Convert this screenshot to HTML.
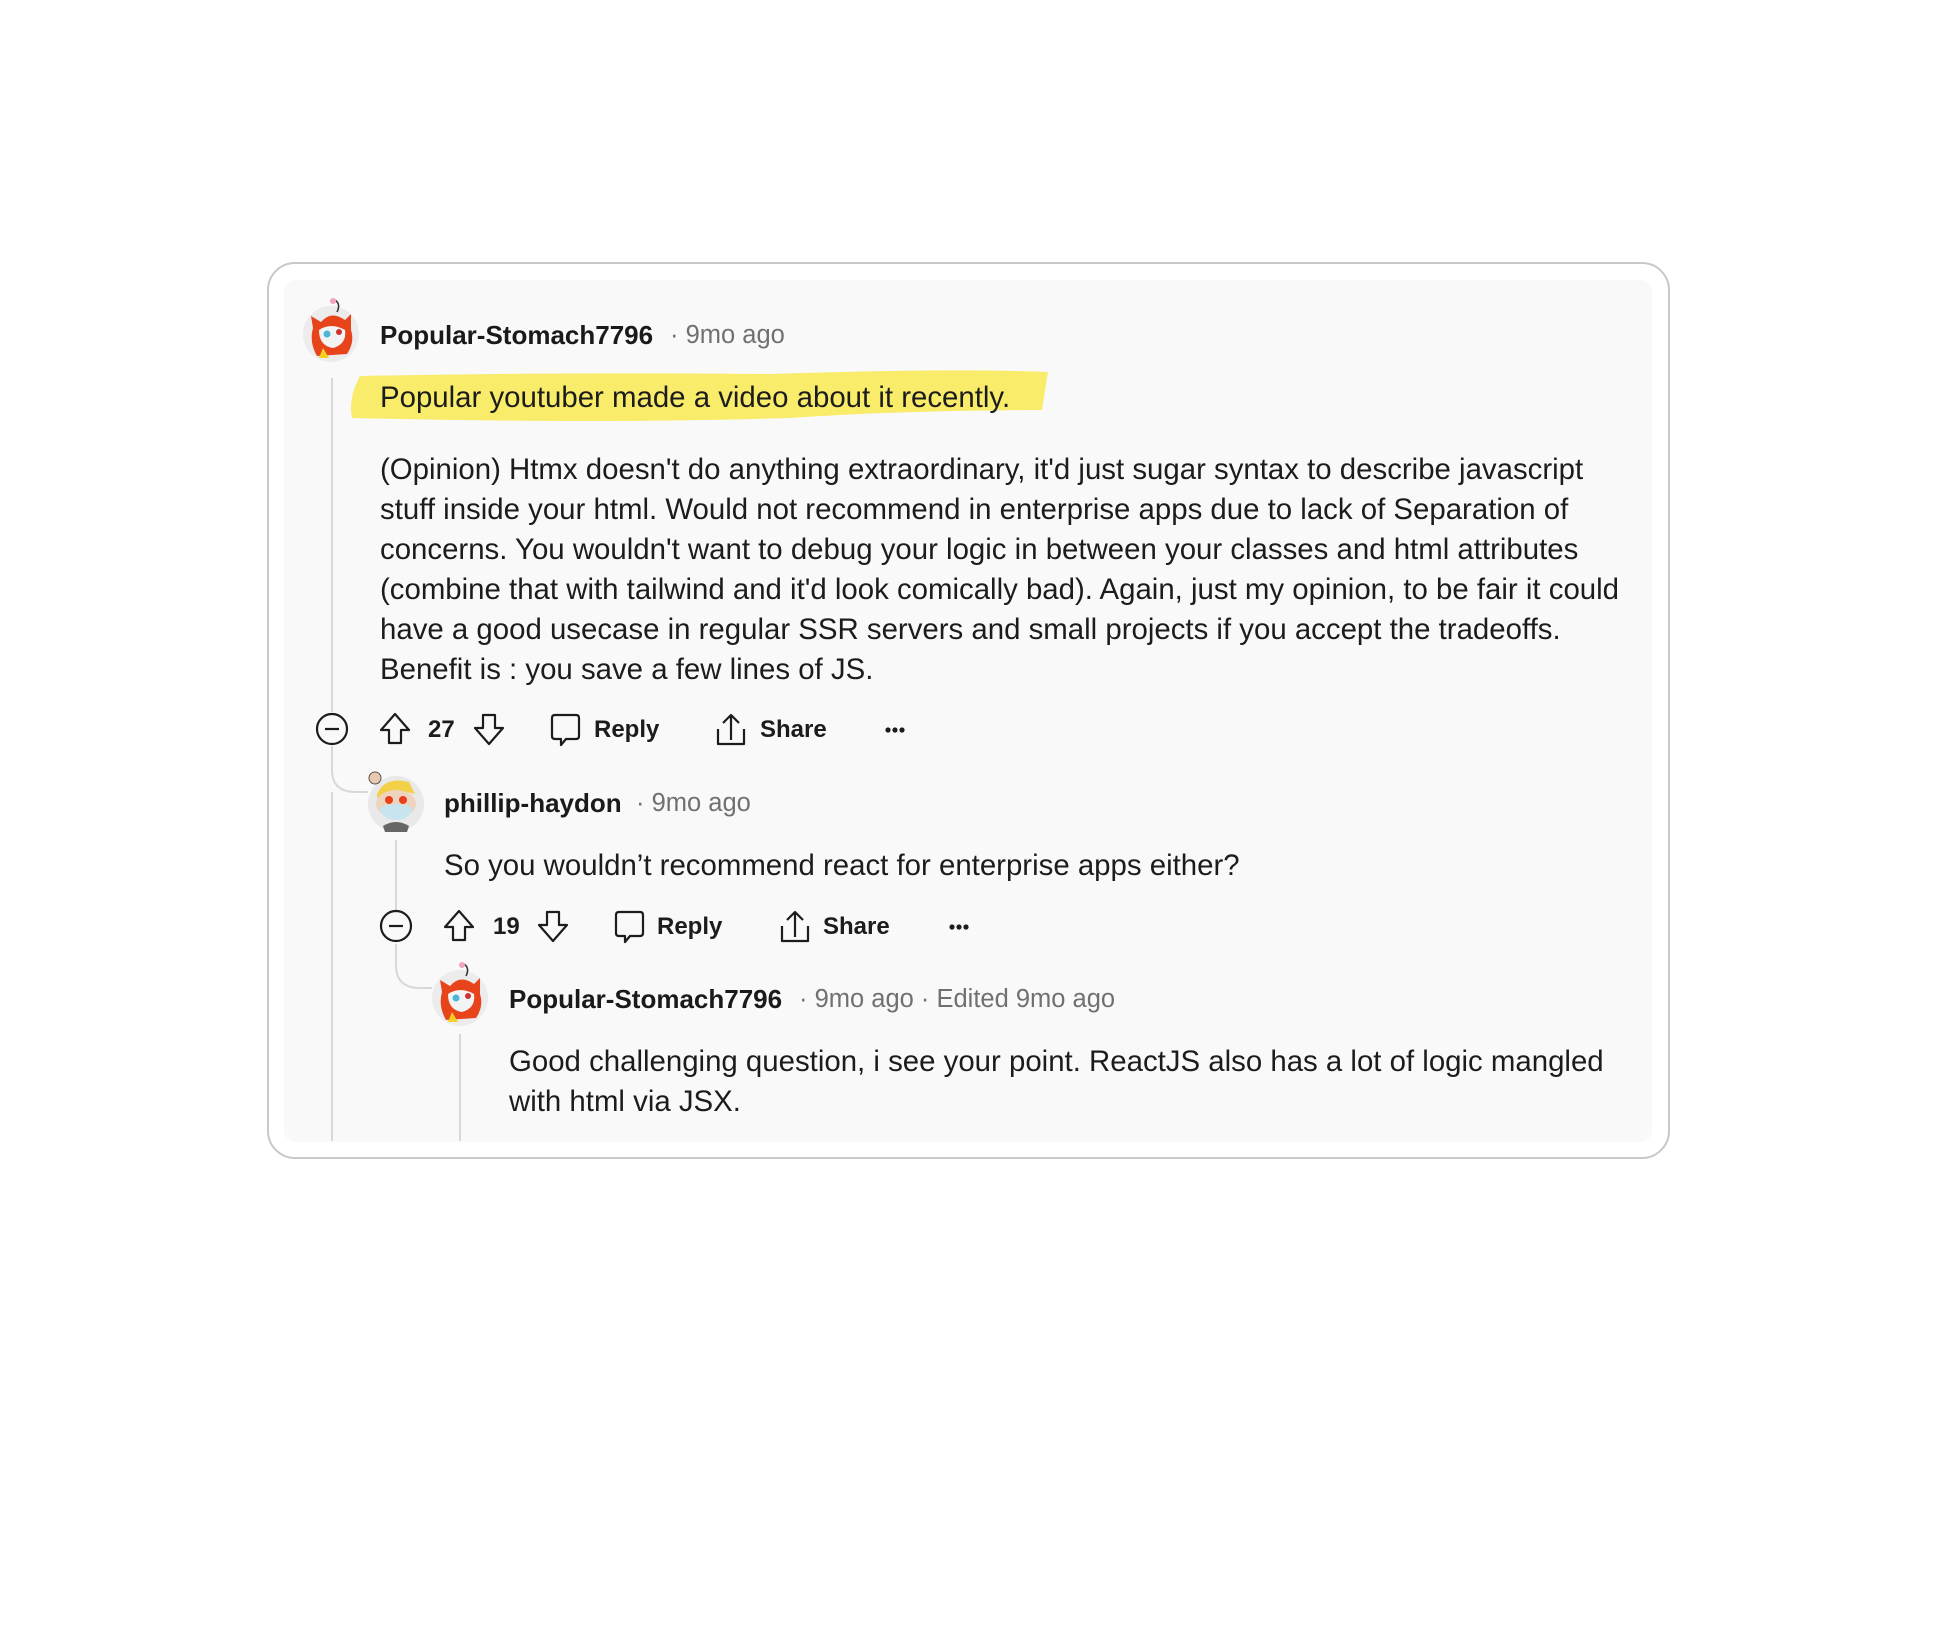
<!DOCTYPE html>
<html><head><meta charset="utf-8">
<style>
*{margin:0;padding:0;box-sizing:border-box}
body{width:1936px;height:1430px;background:#fff;position:relative;overflow:hidden;font-family:"Liberation Sans",Arial,sans-serif;color:#1c1c1c}
.card{position:absolute;left:267px;top:262px;width:1403px;height:897px;border:2px solid #c8c8c8;border-radius:28px;background:#fff}
.inner{position:absolute;left:284px;top:280px;width:1368px;height:862px;background:#f9f9f9;border-radius:12px}
.a{position:absolute;white-space:nowrap}
.name{font-weight:bold;font-size:26px;line-height:30px;color:#1a1a1a}
.meta{font-size:25.5px;line-height:30px;color:#707070}
.body{font-size:29.4px;line-height:40px;color:#1c1c1c}
.act{font-weight:bold;font-size:24px;line-height:30px;color:#1c1c1c}
svg.i{position:absolute;overflow:visible}
</style></head><body>
<div class="card"></div>
<div class="inner"></div>

<svg class="i" style="left:0;top:0" width="1936" height="1430">
 <g fill="none" stroke="#d8d8d8" stroke-width="2">
  <line x1="332" y1="378" x2="332" y2="712"/>
  <path d="M332 746 V770 Q332 792 356 792 H368"/>
  <line x1="332" y1="792" x2="332" y2="1141"/>
  <line x1="396" y1="840" x2="396" y2="910"/>
  <path d="M396 944 V965 Q396 988 420 988 H432"/>
  <line x1="460" y1="1034" x2="460" y2="1141"/>
 </g>
</svg>

<svg class="i" style="left:301px;top:298px" width="60" height="66" viewBox="0 0 60 66">
 <circle cx="30" cy="36" r="28" fill="#ececec"/>
 <path d="M36 14 Q40 6 34 2" stroke="#333" fill="none" stroke-width="1.5"/><circle cx="32" cy="3" r="3" fill="#f4a4b8"/>
 <path d="M12 30 L10 18 L20 24 Q30 12 44 22 L50 16 L50 32 Q54 44 46 56 L16 58 Q8 44 12 30Z" fill="#e8441c"/>
 <path d="M18 32 Q30 24 44 32 Q46 46 32 50 Q18 48 18 32Z" fill="#f3f3f3"/>
 <circle cx="26" cy="36" r="3.5" fill="#4bb7d8"/><circle cx="38" cy="34" r="3" fill="#c33"/>
 <path d="M22 50 L28 60 L18 60Z" fill="#f5d020"/>
</svg>

<div class="a name" style="left:380px;top:320px">Popular-Stomach7796</div>
<div class="a meta" style="left:670px;top:320px">· 9mo ago</div>

<svg class="i" style="left:350px;top:368px" width="700" height="64" viewBox="0 0 700 64">
 <path d="M10 8 Q200 4 420 6 Q600 0 698 4 L692 42 Q560 42 440 50 Q250 56 2 50 Q-2 30 10 8Z" fill="#f8ec6a"/>
</svg>
<div class="a body" style="left:380px;top:378px">Popular youtuber made a video about it recently.</div>

<div class="a body" style="left:380px;top:450px;line-height:40px">(Opinion) Htmx doesn't do anything extraordinary, it'd just sugar syntax to describe javascript<br>stuff inside your html. Would not recommend in enterprise apps due to lack of Separation of<br>concerns. You wouldn't want to debug your logic in between your classes and html attributes<br>(combine that with tailwind and it'd look comically bad). Again, just my opinion, to be fair it could<br>have a good usecase in regular SSR servers and small projects if you accept the tradeoffs.<br>Benefit is : you save a few lines of JS.</div>

<svg class="i" style="left:0;top:0" width="1936" height="1430">
 <g fill="none" stroke="#1c1c1c" stroke-width="2.2" stroke-linejoin="round">
  <circle cx="332" cy="729" r="15"/><line x1="325" y1="729" x2="339" y2="729"/>
  <path d="M395 714 L409 730 H401 V743 H389 V730 H381Z"/>
  <path d="M489 744 L503 728 H495 V715 H483 V728 H475Z"/>
  <path d="M555 715 H576 Q579 715 579 718 V736 Q579 739 576 739 H566 L561 745 V739 H555 Q552 739 552 736 V718 Q552 715 555 715Z"/>
  <path d="M731 740 V716 M723 723 L731 715 L739 723 M718 729 V744 H744 V729"/>
 </g>
 <g fill="#1c1c1c"><circle cx="888" cy="730" r="2.6"/><circle cx="895" cy="730" r="2.6"/><circle cx="902" cy="730" r="2.6"/></g>
</svg>
<div class="a act" style="left:428px;top:715px">27</div>
<div class="a act" style="left:594px;top:715px">Reply</div>
<div class="a act" style="left:760px;top:715px">Share</div>

<svg class="i" style="left:365px;top:768px" width="62" height="66" viewBox="0 0 62 66">
 <circle cx="31" cy="36" r="28" fill="#e9e9e9"/>
 <circle cx="10" cy="10" r="6" fill="#e8c9b0" stroke="#555" stroke-width="1"/>
 <path d="M12 26 Q20 8 44 14 L50 26 Q30 20 12 30Z" fill="#f3d048"/>
 <ellipse cx="31" cy="36" rx="20" ry="14" fill="#eed3bf"/>
 <circle cx="24" cy="32" r="4" fill="#e8401c"/><circle cx="38" cy="32" r="4" fill="#e8401c"/>
 <path d="M14 40 Q31 32 48 40 Q44 52 31 52 Q18 52 14 40Z" fill="#c8e4ee"/>
 <path d="M18 58 Q31 50 44 58 L42 64 H20Z" fill="#666"/>
</svg>
<div class="a name" style="left:444px;top:788px">phillip-haydon</div>
<div class="a meta" style="left:636px;top:788px">· 9mo ago</div>
<div class="a body" style="left:444px;top:846px">So you wouldn’t recommend react for enterprise apps either?</div>

<svg class="i" style="left:64px;top:197px" width="1936" height="1430">
 <g fill="none" stroke="#1c1c1c" stroke-width="2.2" stroke-linejoin="round">
  <circle cx="332" cy="729" r="15"/><line x1="325" y1="729" x2="339" y2="729"/>
  <path d="M395 714 L409 730 H401 V743 H389 V730 H381Z"/>
  <path d="M489 744 L503 728 H495 V715 H483 V728 H475Z"/>
  <path d="M555 715 H576 Q579 715 579 718 V736 Q579 739 576 739 H566 L561 745 V739 H555 Q552 739 552 736 V718 Q552 715 555 715Z"/>
  <path d="M731 740 V716 M723 723 L731 715 L739 723 M718 729 V744 H744 V729"/>
 </g>
 <g fill="#1c1c1c"><circle cx="888" cy="730" r="2.6"/><circle cx="895" cy="730" r="2.6"/><circle cx="902" cy="730" r="2.6"/></g>
</svg>
<div class="a act" style="left:493px;top:912px">19</div>
<div class="a act" style="left:657px;top:912px">Reply</div>
<div class="a act" style="left:823px;top:912px">Share</div>

<svg class="i" style="left:430px;top:962px" width="60" height="66" viewBox="0 0 60 66">
 <circle cx="30" cy="36" r="28" fill="#ececec"/>
 <path d="M36 14 Q40 6 34 2" stroke="#333" fill="none" stroke-width="1.5"/><circle cx="32" cy="3" r="3" fill="#f4a4b8"/>
 <path d="M12 30 L10 18 L20 24 Q30 12 44 22 L50 16 L50 32 Q54 44 46 56 L16 58 Q8 44 12 30Z" fill="#e8441c"/>
 <path d="M18 32 Q30 24 44 32 Q46 46 32 50 Q18 48 18 32Z" fill="#f3f3f3"/>
 <circle cx="26" cy="36" r="3.5" fill="#4bb7d8"/><circle cx="38" cy="34" r="3" fill="#c33"/>
 <path d="M22 50 L28 60 L18 60Z" fill="#f5d020"/>
</svg>
<div class="a name" style="left:509px;top:984px">Popular-Stomach7796</div>
<div class="a meta" style="left:799px;top:984px">· 9mo ago · Edited 9mo ago</div>
<div class="a body" style="left:509px;top:1042px">Good challenging question, i see your point. ReactJS also has a lot of logic mangled<br>with html via JSX.</div>
</body></html>
